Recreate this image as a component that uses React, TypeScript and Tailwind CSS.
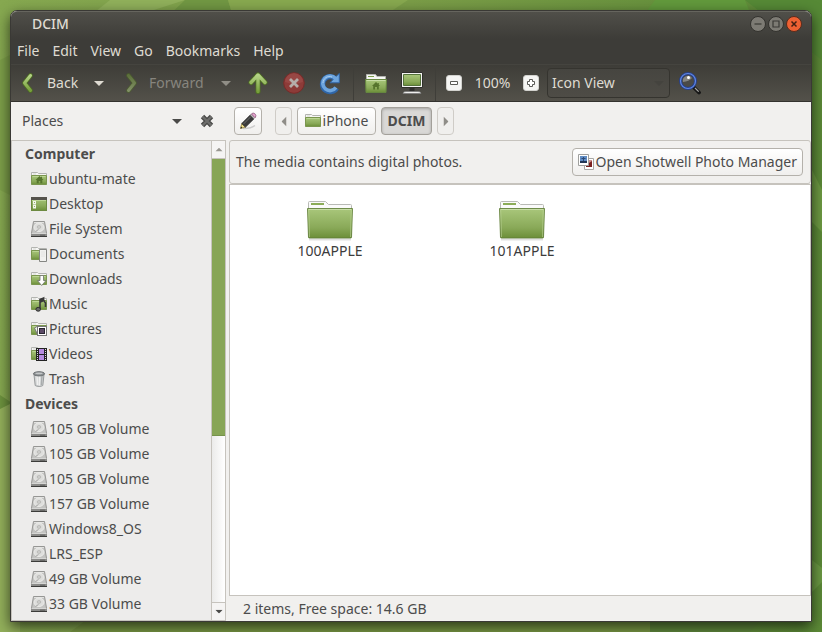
import type { ReactNode } from "react";

type Place = { name: string; icon: ReactNode };

function Caret({ className }: { className: string }) {
  return (
    <svg viewBox="0 0 10 5" className={`h-[5px] w-[10px] shrink-0 ${className}`} aria-hidden="true">
      <path d="M0 0h10L5 5z" fill="currentColor" />
    </svg>
  );
}

/* Small folder, base of most places icons */
function SmallFolder({ children }: { children?: ReactNode }) {
  return (
    <svg viewBox="0 0 16 16" className="size-4 shrink-0" aria-hidden="true">
      <path d="M.5 13V1.500h6l1 1h8V13z" fill="#f6f6f4" stroke="#b3b4b0" />
      <path d="M2 3h3" stroke="#d5d7d1" />
      <path d="M.5 4.500h15v9H.5z" fill="url(#folderGreen)" stroke="#7b964f" />
      <path d="M1.500 5.500h13" stroke="#bcd694" />
      {children}
    </svg>
  );
}

function HomeFolder() {
  return (
    <SmallFolder>
      <path d="M8.500 5L4.500 9h1.200v3.200h2V10h1.600v2.200h2V9h1.200L11 7.400V5.800h-1v.700z" fill="#56752d" />
    </SmallFolder>
  );
}

function DesktopIcon() {
  return (
    <svg viewBox="0 0 16 16" className="size-4 shrink-0" aria-hidden="true">
      <rect x=".5" y="1.500" width="15" height="13" fill="url(#folderGreen)" stroke="#6d8a41" />
      <path d="M0 1h16v3H0z" fill="#55534c" />
      <path d="M1 4.500h14" stroke="#bcd694" />
      <rect x="2.500" y="5.500" width="2" height="2.500" fill="#93b463" stroke="#f2f5ec" />
      <rect x="2.500" y="9.500" width="2" height="2.500" fill="#93b463" stroke="#f2f5ec" />
    </svg>
  );
}

function DriveIcon() {
  return (
    <svg viewBox="0 0 16 16" className="size-4 shrink-0" aria-hidden="true">
      <path d="M2.500.500h11l2 11.500v3H.5v-3z" fill="#c3c3c1" stroke="#969694" />
      <path d="M3 1.500h10" stroke="#e2e2e0" />
      <ellipse cx="8" cy="6.300" rx="5" ry="4.300" fill="#dededc" stroke="#f0f0ee" strokeWidth=".8" />
      <ellipse cx="8" cy="6" rx="1.800" ry="1.400" fill="#d0d0ce" stroke="#b0b0ae" strokeWidth=".7" />
      <path d="M4.500 10.500l3-2" stroke="#a4a4a2" />
      <path d="M0 12h16v4H0z" fill="#8b8b89" />
      <path d="M.5 12.500h15" stroke="#d6d6d4" />
      <path d="M0 15.500h16" stroke="#3c3c3a" />
      <path d="M9 14.200h5" stroke="#555553" strokeWidth=".8" />
    </svg>
  );
}

function DocumentsIcon() {
  return (
    <SmallFolder>
      <path d="M8.500 3.500h7v12h-7z" fill="#f1f1ef" stroke="#858683" />
      <path d="M10 6h4M10 8h4M10 10h4" stroke="#e4e4e2" />
    </SmallFolder>
  );
}

function DownloadsIcon() {
  return (
    <SmallFolder>
      <path d="M9 4.500h3.500v5H15l-4.300 5-4.300-5H9z" fill="#fff" stroke="#6f726b" strokeWidth=".8" />
    </SmallFolder>
  );
}

function MusicIcon() {
  return (
    <SmallFolder>
      <path d="M9 13V3.500L12.500 2q-.5 2.500 2 5v4" fill="none" stroke="#383838" strokeWidth="1.600" />
      <path d="M9 3.500L12.500 2v3.500L9 7z" fill="#383838" />
      <ellipse cx="7.200" cy="13.300" rx="2.300" ry="1.900" fill="#6a6a6a" stroke="#2b2b2b" />
    </SmallFolder>
  );
}

function PicturesIcon() {
  return (
    <SmallFolder>
      <path d="M3.500 7l4-2.500 2 4-3 5z" fill="#f4f4f2" stroke="#777" />
      <rect x="6.500" y="5.500" width="9" height="9" fill="#fff" stroke="#777" />
      <rect x="8.500" y="7.500" width="5" height="5" fill="#5b4a66" stroke="#282430" />
    </SmallFolder>
  );
}

function VideosIcon() {
  return (
    <SmallFolder>
      <path d="M5 2h11v13H5z" fill="#232323" />
      <path d="M8 3h5v5H8zM8 9h5v5H8z" fill="#b58be0" />
      <path d="M6.500 3v12M14.500 3v12" stroke="#ddd" strokeDasharray="1 1" />
    </SmallFolder>
  );
}

function TrashIcon() {
  return (
    <svg viewBox="0 0 16 16" className="size-4 shrink-0" aria-hidden="true">
      <path d="M3 3.500h10l-1.200 11c-1.500 1.200-6 1.200-7.600 0z" fill="#d4d6d6" stroke="#979a9b" />
      <path d="M6 5l.6 9M8.500 5v9.500" stroke="#efefef" strokeWidth="1.400" />
      <path d="M11 5l-.7 9" stroke="#a9acad" strokeWidth="1.400" />
      <ellipse cx="8" cy="2.800" rx="5.600" ry="2.100" fill="#8b8f91" stroke="#6e7274" />
      <ellipse cx="8" cy="2.400" rx="3.700" ry=".8" fill="#c4c7c8" />
    </svg>
  );
}

function BigFolder() {
  return (
    <svg viewBox="0 0 48 48" className="size-12" aria-hidden="true">
      <path d="M3 44.500h42" stroke="#000" strokeOpacity=".12" strokeWidth="2" />
      <path d="M2.500 40V7.500q0-1 1-1h16l3 3h22q1 0 1 1V40z" fill="#fafafa" stroke="#b8bab5" />
      <path d="M5 9h13" stroke="#8bac57" strokeWidth="2" />
      <path d="M1.500 13.500h45l-1 29q0 .500-1 .500h-41q-1 0-1-.5z" fill="url(#folderGreen)" stroke="#5f7c36" strokeOpacity=".85" />
      <path d="M2.500 14.500h43" stroke="#c7dda6" />
      <path d="M2.700 15l.8 27M45.300 15l-.8 27" stroke="#c7dda6" strokeOpacity=".5" />
    </svg>
  );
}

function Arrow({ dim = false }: { dim?: boolean }) {
  return (
    <svg
      viewBox="0 0 16 22"
      className={dim ? "h-[22px] w-4 shrink-0 rotate-180 opacity-50" : "h-[22px] w-4 shrink-0"}
      aria-hidden="true"
    >
      <path d="M11.500 3.500L5.500 11l6 7.500" fill="none" stroke="#4f7022" strokeWidth="4.600" strokeLinejoin="round" strokeLinecap="round" />
      <path d="M11.500 3.500L5.500 11l6 7.500" fill="none" stroke="url(#arrowGreen)" strokeWidth="3" strokeLinejoin="round" strokeLinecap="round" />
    </svg>
  );
}

function UpIcon() {
  return (
    <svg viewBox="0 0 24 24" className="size-6" aria-hidden="true">
      <path d="M12 20.500V5M5 11.500L12 4l7 7.500" fill="none" stroke="#4f7022" strokeWidth="5" strokeLinejoin="round" strokeLinecap="round" />
      <path d="M12 20.500V5M5 11.500L12 4l7 7.500" fill="none" stroke="url(#arrowGreen)" strokeWidth="3.400" strokeLinejoin="round" strokeLinecap="round" />
    </svg>
  );
}

function StopIcon() {
  return (
    <svg viewBox="0 0 24 24" className="size-6" aria-hidden="true">
      <circle cx="12" cy="12" r="10.300" fill="#8d3b38" stroke="#782b29" />
      <path d="M3 11a9 9 0 0 1 18 0q-9 3-18 0z" fill="#a35350" opacity=".5" />
      <path d="M8 8l8 8M16 8l-8 8" stroke="#b5aeaa" strokeWidth="2.800" />
    </svg>
  );
}

function ReloadIcon() {
  return (
    <svg viewBox="0 0 24 24" className="size-6" aria-hidden="true">
      <path d="M18.500 17A7.500 7.500 0 1 1 17 7.500" fill="none" stroke="#2f66a8" strokeWidth="5.400" />
      <path d="M17 6.500l4.300-4v9.300h-9.300z" fill="#6ea5dd" stroke="#2f66a8" />
      <path d="M18 16.500A7.300 7.300 0 1 1 17.500 7.500" fill="none" stroke="#6ea5dd" strokeWidth="3.600" />
      <path d="M5 12a6.500 6.500 0 0 1 9-6" fill="none" stroke="#a9cdf0" />
    </svg>
  );
}

function ToolbarHomeIcon() {
  return (
    <svg viewBox="0 0 24 24" className="size-6" aria-hidden="true">
      <path d="M2.500 20V3.500h9l1.500 2h8.500V20z" fill="#f7f7f5" stroke="#b4b5b0" />
      <path d="M4 5.500h6" stroke="#7d9e4b" />
      <path d="M1.500 8.500h21l-.5 13H2z" fill="url(#folderGreen)" stroke="#668740" />
      <path d="M2.500 9.500h19" stroke="#c7dda6" />
      <path d="M12 11l-4 4h1.200v3.500h1.800V16h2v2.500h1.800V15H16l-1.200-1.300V12h-1v.800z" fill="#56752d" />
    </svg>
  );
}

function ComputerIcon() {
  return (
    <svg viewBox="0 0 24 24" className="size-6" aria-hidden="true">
      <path d="M1.500 1.500h21v15h-21z" fill="#f4f4f2" stroke="#30302c" />
      <path d="M3.500 3.500h17v11h-17z" fill="url(#folderGreen)" stroke="#55733b" />
      <path d="M9.500 17h5v3h-5z" fill="#2e2e2c" />
      <path d="M3 22.500q0-2 3-2h12q3 0 3 2z" fill="#eeeeec" stroke="#777" strokeWidth=".7" />
    </svg>
  );
}

function SearchIcon() {
  return (
    <svg viewBox="0 0 24 24" className="size-6" aria-hidden="true">
      <path d="M16 16.500l5 5" stroke="#171717" strokeWidth="3.800" strokeLinecap="round" />
      <path d="M17 17l3.700 3.700" stroke="#a6a6a2" strokeWidth="1.200" />
      <circle cx="10" cy="10" r="7.500" fill="#4a4a47" stroke="#26418f" strokeWidth="3" />
      <circle cx="10" cy="10" r="7.500" fill="none" stroke="#6389e0" strokeWidth="1.200" />
      <path d="M5 11a5 5 0 0 1 9-4q-3 3.500-9 4z" fill="#858582" />
      <circle cx="10.500" cy="6.500" r="1.500" fill="#fff" />
    </svg>
  );
}

function PencilIcon() {
  return (
    <svg viewBox="0 0 18 18" className="size-[18px]" aria-hidden="true">
      <path d="M4 16.500q7 .500 12-3" stroke="#ccc" strokeWidth="1.400" fill="none" />
      <path d="M1.500 16.500l1.300-5 3.700 3.600z" fill="#f2e28a" stroke="#8a7a3a" strokeWidth=".8" />
      <path d="M1.500 16.500l.5-2 1.500 1.500z" fill="#222" />
      <path d="M2.800 11.500L11.300 3l3.700 3.700-8.500 8.400z" fill="#3a3a3a" stroke="#222" strokeWidth=".8" />
      <path d="M4.500 12L12 4.500" stroke="#6d6d6d" />
      <path d="M11.300 3l1-1 3.700 3.700-1 1z" fill="#c9c9c9" stroke="#777" strokeWidth=".5" />
      <path d="M12.500 1.900Q14 .2 15.800 1.700t.7 3.600l-.5.400z" fill="#e9a6d2" stroke="#8e5b7c" strokeWidth=".8" />
    </svg>
  );
}

function CloseCross() {
  return (
    <svg viewBox="0 0 14 14" className="size-[14px]" aria-hidden="true">
      <path d="M2.500 2.500l9 9M11.500 2.500l-9 9" stroke="#4a4a48" strokeWidth="4.800" />
      <path d="M2.500 2.500l9 9M11.500 2.500l-9 9" stroke="#6d6d6b" strokeWidth="2.400" />
    </svg>
  );
}

function PhotosIcon() {
  return (
    <svg viewBox="0 0 16 16" className="size-4 shrink-0" aria-hidden="true">
      <path d="M6.500 4.500h9v11h-9z" fill="#fff" stroke="#a8a8a6" />
      <path d="M8 6h6v7H8z" fill="#c98e8c" />
      <path d="M8 10.500l3-1.500 3-2v6H8z" fill="#79201f" />
      <path d="M.5.500h10v11H.5z" fill="#fff" stroke="#a0a09e" />
      <path d="M2 2h7v7H2z" fill="#5f8cc4" />
      <path d="M2 7h7v2H2z" fill="#1f3556" />
      <path d="M3.500 4.500h4M5.500 3v4" stroke="#2c4a77" />
    </svg>
  );
}

function ZoomButton({ label, d }: { label: string; d: string }) {
  return (
    <button type="button" aria-label={label} className="flex h-full w-7 items-center justify-center">
      <svg viewBox="0 0 16 16" className="size-4" aria-hidden="true">
        <rect x=".5" y=".5" width="15" height="15" rx="2.500" fill="#f5f5f3" stroke="#d2d2ce" />
        <path d={d} fill="#fff" stroke="#5b5b57" />
      </svg>
    </button>
  );
}

const computer: Place[] = [
  { name: "ubuntu-mate", icon: <HomeFolder /> },
  { name: "Desktop", icon: <DesktopIcon /> },
  { name: "File System", icon: <DriveIcon /> },
  { name: "Documents", icon: <DocumentsIcon /> },
  { name: "Downloads", icon: <DownloadsIcon /> },
  { name: "Music", icon: <MusicIcon /> },
  { name: "Pictures", icon: <PicturesIcon /> },
  { name: "Videos", icon: <VideosIcon /> },
  { name: "Trash", icon: <TrashIcon /> },
];

const devices = [
  "105 GB Volume",
  "105 GB Volume",
  "105 GB Volume",
  "157 GB Volume",
  "Windows8_OS",
  "LRS_ESP",
  "49 GB Volume",
  "33 GB Volume",
].map((name) => ({ name, icon: <DriveIcon /> }));

const menus = ["File", "Edit", "View", "Go", "Bookmarks", "Help"];
const folders = ["100APPLE", "101APPLE"];

function PlaceGroup({ title, places }: { title: string; places: Place[] }) {
  return (
    <section>
      <h2 className="h-[25px] pl-[13px] font-bold leading-[25px]">{title}</h2>
      <ul>
        {places.map((place, i) => (
          <li key={i}>
            <a href="#" className="flex h-[25px] items-center gap-[2px] pl-[19px] whitespace-nowrap">
              {place.icon}
              {place.name}
            </a>
          </li>
        ))}
      </ul>
    </section>
  );
}

function TitleBar() {
  return (
    <header className="flex h-7 items-center justify-between rounded-t-[6px] border-t border-[#66655e] bg-linear-to-b from-[#504f49] to-[#3d3c38] pr-[9px] pb-[3px] pl-[21px] text-[#dfdbd2]">
      <h1 className="font-medium">DCIM</h1>
      <div className="flex gap-[2px]">
        <button type="button" aria-label="Minimize">
          <svg viewBox="0 0 16 16" className="size-4" aria-hidden="true">
            <circle cx="8" cy="8" r="7.500" fill="#7d7b74" stroke="#33322e" />
            <path d="M4.500 8h7" stroke="#3a3935" strokeWidth="1.200" />
          </svg>
        </button>
        <button type="button" aria-label="Maximize">
          <svg viewBox="0 0 16 16" className="size-4" aria-hidden="true">
            <circle cx="8" cy="8" r="7.500" fill="#7d7b74" stroke="#33322e" />
            <path d="M5 5h6v6H5z" fill="none" stroke="#3a3935" strokeWidth="1.200" />
          </svg>
        </button>
        <button type="button" aria-label="Close">
          <svg viewBox="0 0 16 16" className="size-4" aria-hidden="true">
            <circle cx="8" cy="8" r="7.500" fill="#ee6133" stroke="#5a2c1c" />
            <path d="M5.500 5.500l5 5M10.500 5.500l-5 5" stroke="#432013" strokeWidth="1.500" />
          </svg>
        </button>
      </div>
    </header>
  );
}

function Toolbar() {
  return (
    <div className="flex h-[37px] items-center border-b border-[#33322e] bg-linear-to-b from-[#3e3d38] to-[#53514a] text-[#dfdbd2]">
      <button type="button" className="flex h-full w-[74px] items-center gap-3 pl-2">
        <Arrow />
        Back
      </button>
      <button type="button" aria-label="Back history" className="flex h-full w-7 items-center justify-center">
        <Caret className="text-[#dfdbd2]" />
      </button>
      <button type="button" disabled className="flex h-full w-[99px] items-center gap-[9px] pl-[11px] text-[#87857e]">
        <Arrow dim />
        Forward
      </button>
      <button type="button" disabled aria-label="Forward history" className="flex h-full w-7 items-center justify-center">
        <Caret className="text-[#908e86]" />
      </button>
      <button type="button" aria-label="Up" className="flex h-full w-9 items-center justify-center">
        <UpIcon />
      </button>
      <button type="button" disabled aria-label="Stop" className="flex h-full w-9 items-center justify-center">
        <StopIcon />
      </button>
      <button type="button" aria-label="Reload" className="flex h-full w-9 items-center justify-center">
        <ReloadIcon />
      </button>
      <div className="mr-1 ml-[5px] h-full w-px bg-[#3f3e39]" />
      <button type="button" aria-label="Home" className="flex h-full w-9 items-center justify-center">
        <ToolbarHomeIcon />
      </button>
      <button type="button" aria-label="Computer" className="flex h-full w-9 items-center justify-center">
        <ComputerIcon />
      </button>
      <div className="mr-1 ml-[5px] h-full w-px bg-[#3f3e39]" />
      <ZoomButton label="Zoom out" d="M4.500 6.500h7v3h-7z" />
      <span className="w-[49px] text-center">100%</span>
      <ZoomButton label="Zoom in" d="M6.500 4.500h3v2h2v3h-2v2h-3v-2h-2v-3h2z" />
      <div className="ml-[2px] grid w-[123px] items-center">
        <select
          aria-label="View mode"
          className="col-start-1 row-start-1 h-[30px] w-full appearance-none rounded-[4px] border border-[#35342f] bg-linear-to-b from-[#464540] to-[#4e4c46] pl-1"
        >
          <option>Icon View</option>
          <option>List View</option>
          <option>Compact View</option>
        </select>
        <Caret className="pointer-events-none col-start-1 row-start-1 mr-[6px] justify-self-end text-[#44433e]" />
      </div>
      <button type="button" aria-label="Search" className="ml-[2px] flex h-full w-9 items-center justify-center">
        <SearchIcon />
      </button>
    </div>
  );
}

function Sidebar() {
  return (
    <aside className="flex w-[215px] shrink-0 flex-col">
      <div className="flex h-[38px] items-center pr-3 pl-[11px]">
        <button type="button" className="flex flex-1 items-center justify-between pr-[18px]">
          Places
          <Caret className="text-[#4a4a48]" />
        </button>
        <button type="button" aria-label="Close places">
          <CloseCross />
        </button>
      </div>
      <div className="flex flex-1 border border-[#c6c3bd] bg-[#edeceb]">
        <nav className="flex-1 pb-1">
          <PlaceGroup title="Computer" places={computer} />
          <PlaceGroup title="Devices" places={devices} />
        </nav>
        <div className="flex w-[14px] shrink-0 flex-col border-l border-[#c6c3bd] bg-linear-to-r from-[#ebebea] to-white">
          <button type="button" aria-label="Scroll up" className="flex h-[18px] items-center justify-center border-b border-[#c6c3bd] bg-[#f5f4f3]">
            <Caret className="rotate-180 scale-75 text-[#989690]" />
          </button>
          <div className="flex-[277] border-b border-[#75924a] bg-[#87a556]" />
          <div className="flex-[167]" />
          <button type="button" aria-label="Scroll down" className="flex h-[18px] items-center justify-center border-t border-[#c6c3bd] bg-[#f5f4f3]">
            <Caret className="scale-75 text-[#4a4a48]" />
          </button>
        </div>
      </div>
    </aside>
  );
}

function LocationBar() {
  return (
    <div className="flex h-[38px] items-center pl-[5px]">
      <button
        type="button"
        aria-label="Edit location"
        className="mr-[13px] flex size-7 items-center justify-center rounded-[4px] border border-[#b4b1ab] bg-linear-to-b from-white to-[#f0efed]"
      >
        <PencilIcon />
      </button>
      <div className="flex gap-[5px]">
        <button
          type="button"
          aria-label="Previous folders"
          className="flex h-7 w-[17px] items-center justify-center rounded-[4px] border border-[#cfccc7] bg-[#f0efed] text-[#8f8d88]"
        >
          <Caret className="rotate-90" />
        </button>
        <button
          type="button"
          className="flex h-7 w-[79px] items-center justify-center gap-[2px] rounded-[4px] border border-[#b4b1ab] bg-linear-to-b from-white to-[#f0efed]"
        >
          <SmallFolder />
          iPhone
        </button>
        <button
          type="button"
          aria-pressed="true"
          className="h-7 w-[51px] rounded-[4px] border border-[#a3a09a] bg-[#d9d8d6] font-bold shadow-[inset_0_1px_3px_rgba(0,0,0,0.25)]"
        >
          DCIM
        </button>
        <button
          type="button"
          aria-label="Next folders"
          className="flex h-7 w-[17px] items-center justify-center rounded-[4px] border border-[#cfccc7] bg-[#f0efed] text-[#8f8d88]"
        >
          <Caret className="-rotate-90" />
        </button>
      </div>
    </div>
  );
}

function FilePane() {
  return (
    <main className="ml-[3px] flex min-w-0 flex-1 flex-col">
      <LocationBar />
      <div className="flex h-11 items-center justify-between rounded-[3px] border border-[#c6c3bd] pr-[7px] pl-[6px]">
        <p>The media contains digital photos.</p>
        <button
          type="button"
          className="flex h-7 items-center gap-[2px] rounded-[4px] border border-[#b4b1ab] bg-linear-to-b from-white to-[#f0efed] px-[5px] whitespace-nowrap"
        >
          <PhotosIcon />
          Open Shotwell Photo Manager
        </button>
      </div>
      <ul className="flex flex-1 flex-wrap content-start border border-[#c6c3bd] bg-white pt-[10px] pl-1 text-[#3c3c3c]">
        {folders.map((name) => (
          <li key={name} className="w-48">
            <a href="#" className="flex flex-col items-center leading-4">
              <BigFolder />
              {name}
            </a>
          </li>
        ))}
      </ul>
      <footer className="h-[25px] pl-[14px] leading-[25px]">2 items, Free space: 14.6 GB</footer>
    </main>
  );
}

function Wallpaper() {
  return (
    <svg
      viewBox="0 0 822 632"
      preserveAspectRatio="none"
      className="absolute inset-0 -z-10 size-full"
      aria-hidden="true"
    >
      <defs>
        <linearGradient id="wall" x1="0" x2="1" y1="0" y2="0">
          <stop offset="0" stopColor="#86a850" />
          <stop offset=".5" stopColor="#7a9c47" />
          <stop offset="1" stopColor="#5c8a37" />
        </linearGradient>
        <linearGradient id="folderGreen" x1="0" x2="0" y1="0" y2="1">
          <stop offset="0" stopColor="#a9c77b" />
          <stop offset=".65" stopColor="#89a958" />
          <stop offset="1" stopColor="#6c8f38" />
        </linearGradient>
        <linearGradient id="arrowGreen" x1="0" x2="0" y1="0" y2="1">
          <stop offset="0" stopColor="#b5d387" />
          <stop offset="1" stopColor="#78a03c" />
        </linearGradient>
      </defs>
      <path d="M0 0h822v632H0z" fill="url(#wall)" />
      <path d="M110 0h75L60 40z" fill="#90b05b" />
      <path d="M185 0h43l6 20h-70z" fill="#719743" />
      <path d="M228 0h180l-30 20H234z" fill="#87a84f" />
      <path d="M655 0h90l8 20H640z" fill="#62993c" />
      <path d="M745 0h77v60z" fill="#568936" />
      <path d="M0 60l20-10v150L0 190z" fill="#7d9f49" />
      <path d="M0 400l20 5v227H0z" fill="#93b05b" />
      <path d="M0 395l12 8-12 6z" fill="#6d923e" />
      <path d="M812 170l10 20v42l-10-10z" fill="#6d9a42" />
      <path d="M812 560l10 8v14l-10 10z" fill="#6b9943" />
      <path d="M100 610h550v22H70z" fill="#7b9a45" />
      <path d="M650 610h120l-20 22H650z" fill="#618a3c" />
    </svg>
  );
}

export default function App() {
  return (
    <div className="relative isolate flex min-h-screen cursor-default p-[10px] font-['Noto_Sans','Open_Sans',sans-serif] text-sm text-[#4c4c4c]">
      <Wallpaper />
      <div className="flex min-w-0 flex-1 flex-col rounded-t-[7px] border border-[#3a3935] bg-[#f1f0ee] shadow-[0_5px_14px_rgba(0,0,0,0.65)]">
        <TitleBar />
        <nav className="flex h-[26px] items-center gap-[13px] border-b border-[#45443f] bg-[#3d3c38] pb-[2px] pl-[6px] text-[#dfdbd2]">
          {menus.map((menu) => (
            <button key={menu} type="button">
              {menu}
            </button>
          ))}
        </nav>
        <Toolbar />
        <div className="flex flex-1">
          <Sidebar />
          <FilePane />
        </div>
      </div>
    </div>
  );
}
